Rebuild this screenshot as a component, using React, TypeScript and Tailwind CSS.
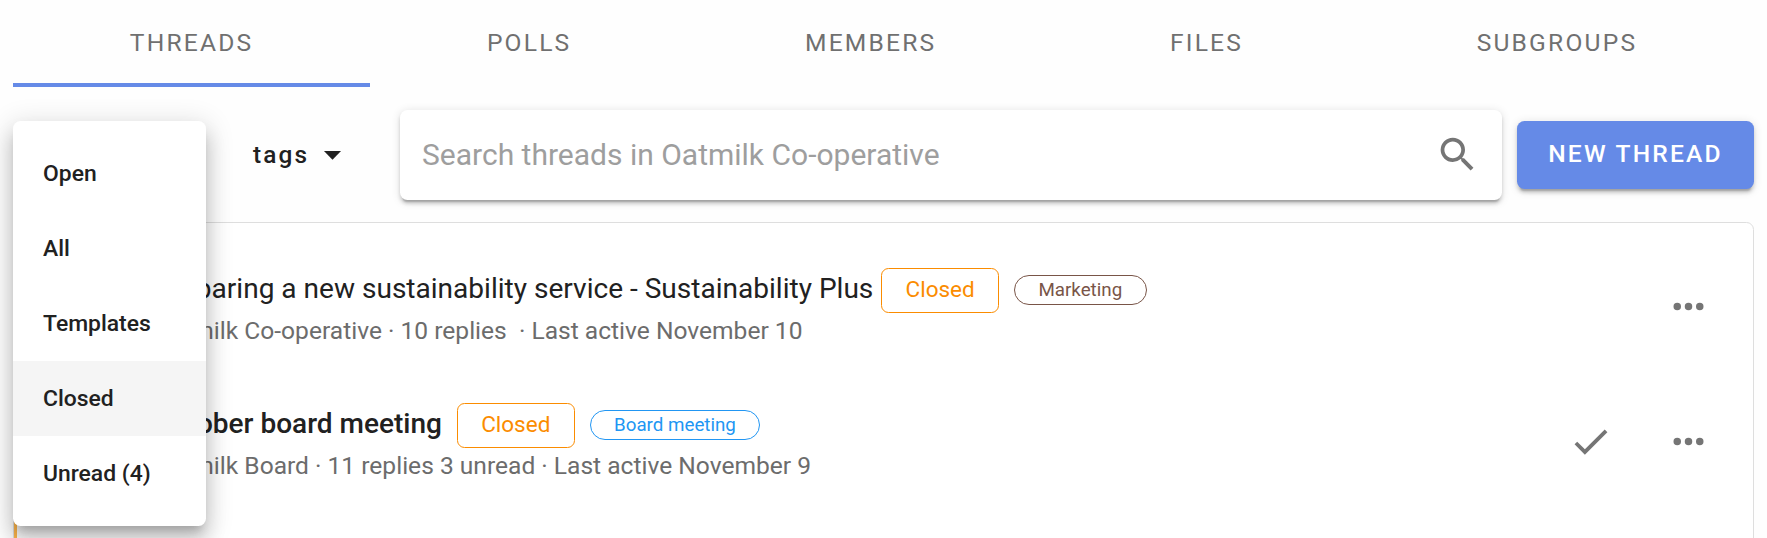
import type { ReactNode } from "react";

const tabs = ["Threads", "Polls", "Members", "Files", "Subgroups"];
const filters = ["Open", "All", "Templates", "Closed", "Unread (4)"];

function Icon({ d, className }: { d: string; className: string }) {
  return (
    <svg viewBox="0 0 24 24" fill="currentColor" className={className} aria-hidden="true">
      <path d={d} />
    </svg>
  );
}

const magnify =
  "M9.5 3A6.5 6.5 0 0 1 16 9.5c0 1.61-.59 3.09-1.56 4.23l.27.27h.79l5 5-1.5 1.5-5-5v-.79l-.27-.27A6.516 6.516 0 0 1 9.5 16 6.5 6.5 0 0 1 3 9.5 6.5 6.5 0 0 1 9.5 3m0 2C7 5 5 7 5 9.5S7 14 9.5 14 14 12 14 9.5 12 5 9.5 5z";
const dots =
  "M16 12a2 2 0 0 1 2-2 2 2 0 0 1 2 2 2 2 0 0 1-2 2 2 2 0 0 1-2-2m-6 0a2 2 0 0 1 2-2 2 2 0 0 1 2 2 2 2 0 0 1-2 2 2 2 0 0 1-2-2m-6 0a2 2 0 0 1 2-2 2 2 0 0 1 2 2 2 2 0 0 1-2 2 2 2 0 0 1-2-2z";
const check = "M21 7 9 19l-5.5-5.5 1.41-1.41L9 16.17 19.59 5.59 21 7z";

function ClosedChip() {
  return (
    <span className="flex h-[45px] items-center rounded-[7.5px] border border-[#fb8c00] px-[23.2px] pb-[2px] text-[22.5px] text-[#fb8c00]">
      Closed
    </span>
  );
}

function Tag({ color, children }: { color: string; children: ReactNode }) {
  return (
    <span className={`mb-px ml-[15px] flex h-[30px] items-center rounded-full border px-[23.5px] text-[18.75px] ${color}`}>
      {children}
    </span>
  );
}

function ThreadRow(props: { title: ReactNode; chips: ReactNode; detail: string; done?: boolean }) {
  return (
    <div className="flex h-[135px] items-center border-l-[3px] border-transparent pr-[42px] pl-[31px]">
      <div className="h-[67px] w-[67px] shrink-0 rounded-full bg-[#bdbdbd]" />
      <div className="flex grow flex-col pt-[3px] pl-[39px]">
        <div className="flex h-[45px] items-center leading-none">
          {props.title}
          {props.chips}
        </div>
        <div className="h-[35px] text-[24.57px] leading-[35px] whitespace-pre text-[#6c6c6c]">{props.detail}</div>
      </div>
      <div className="flex items-center gap-[53px] text-[#757575]">
        {props.done && <Icon d={check} className="size-[45px]" />}
        <Icon d={dots} className="size-[45px]" />
      </div>
    </div>
  );
}

export default function App() {
  return (
    <div className="h-[538px] overflow-hidden bg-[#fefefe] px-[13px] font-[Roboto,sans-serif] text-[#212121]">
      <nav className="flex h-[87px] text-[24.6px] tracking-[0.0893em] text-[#707070] uppercase">
        {tabs.map((tab, i) => (
          <div
            key={tab}
            className={`flex flex-auto items-center justify-center border-b-4 pt-[3px] ${i === 0 ? "border-[#658ae7]" : "border-transparent"}`}
          >
            {tab}
          </div>
        ))}
      </nav>

      <div className="relative mt-[23px] flex h-[90px] items-center">
        <button className="ml-[240px] flex items-center text-[24.375px] font-medium tracking-[0.0893em]">
          tags
          <Icon d="M7 10l5 5 5-5H7z" className="mb-[2px] ml-[3px] size-[41px]" />
        </button>
        <div className="ml-auto flex h-[90px] w-[1102px] items-center justify-between rounded-[7.5px] bg-white pr-[22.5px] pb-[2px] pl-[22px] text-[30px] text-[#9e9e9e] shadow-[0_5.6px_1.9px_-3.75px_rgba(0,0,0,.2),0_3.75px_3.75px_0_rgba(0,0,0,.14),0_1.9px_9.4px_0_rgba(0,0,0,.12)]">
          <span>Search threads in Oatmilk Co-operative</span>
          <Icon d={magnify} className="size-[45px] text-[#757575]" />
        </div>
        <button className="ml-[15px] flex h-[68px] w-[237px] items-center justify-center rounded-[7.5px] bg-[#658ae7] pb-[2px] text-[24.6px] font-medium tracking-[0.0893em] whitespace-nowrap text-white uppercase shadow-[0_5.6px_1.9px_-3.75px_rgba(0,0,0,.2),0_3.75px_3.75px_0_rgba(0,0,0,.14),0_1.9px_9.4px_0_rgba(0,0,0,.12)]">
          New thread
        </button>

        <div className="absolute top-[11px] left-0 z-10 w-[193px] rounded-[7.5px] bg-white py-[15px] text-[22.9px] font-medium shadow-[0_9.4px_9.4px_-5.6px_rgba(0,0,0,.2),0_15px_18.75px_1.9px_rgba(0,0,0,.14),0_5.6px_26.25px_3.75px_rgba(0,0,0,.12)]">
          {filters.map((f) => (
            <div
              key={f}
              className={`flex h-[75px] items-center pt-[2px] pl-[30px] ${f === "Closed" ? "bg-[#f5f5f5]" : ""}`}
            >
              {f}
            </div>
          ))}
        </div>
      </div>

      <div className="mt-[22px] h-[400px] rounded-[7.5px] border border-[#dedede] bg-white pt-[16px]">
        <ThreadRow
          title={<span className="mr-[8px] pb-[2px] text-[28.06px]">Preparing a new sustainability service - Sustainability Plus</span>}
          chips={
            <>
              <ClosedChip />
              <Tag color="border-[#795548] text-[#795548]">Marketing</Tag>
            </>
          }
          detail="Oatmilk Co-operative · 10 replies  · Last active November 10"
        />
        <ThreadRow
          title={<span className="mr-[15px] pb-[2px] text-[28.03px] font-medium">October board meeting</span>}
          chips={
            <>
              <ClosedChip />
              <Tag color="border-[#2196f3] text-[#2196f3]">Board meeting</Tag>
            </>
          }
          detail="Oatmilk Board · 11 replies 3 unread · Last active November 9"
          done
        />
        <div className="h-[135px] border-l-[3px] border-[#ffb74d]" />
      </div>
    </div>
  );
}
